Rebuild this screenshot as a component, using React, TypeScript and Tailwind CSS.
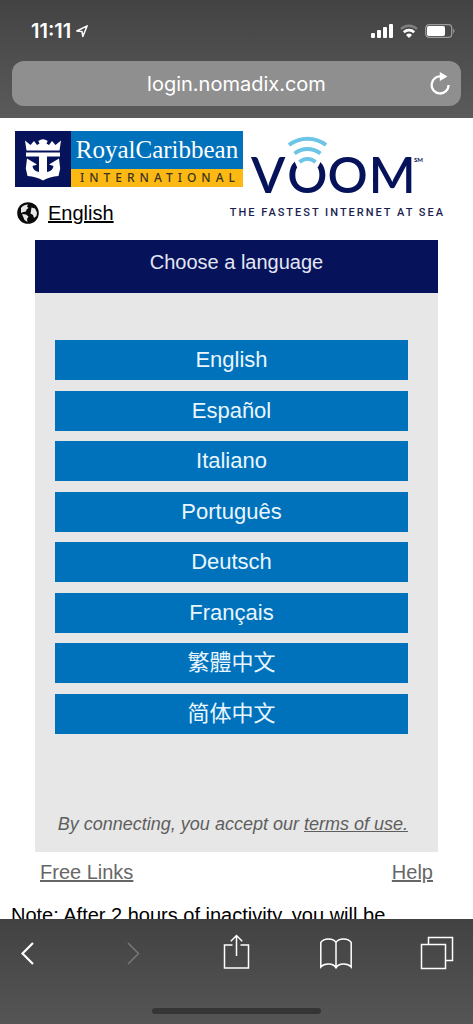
import type { ReactNode } from "react";

const languages = [
  { code: "en", label: "English" },
  { code: "es", label: "Español" },
  { code: "it", label: "Italiano" },
  { code: "pt", label: "Português" },
  { code: "de", label: "Deutsch" },
  { code: "fr", label: "Français" },
  { code: "zh-Hant", label: "繁體中文" },
  { code: "zh-Hans", label: "简体中文" },
];

function StatusIcons() {
  return (
    <div className="flex items-center gap-[7px] text-white">
      <svg width="22" height="14" viewBox="0 0 22 14" fill="currentColor">
        <rect x="0" y="9" width="4" height="5" rx="1" />
        <rect x="6" y="6" width="4" height="8" rx="1" />
        <rect x="12" y="3" width="4" height="11" rx="1" />
        <rect x="18" y="0" width="4" height="14" rx="1" />
      </svg>
      <svg width="18" height="14" viewBox="0 0 18 14" fill="none" stroke="currentColor">
        <path d="M1 5a11.5 11.5 0 0 1 16 0" strokeWidth="2.4" opacity="0.3" />
        <path d="M3.8 8.2a7.6 7.6 0 0 1 10.4 0" strokeWidth="2.6" />
        <path d="M6 11a4.4 4.4 0 0 1 6 0l-3 3z" fill="currentColor" stroke="none" />
      </svg>
      <svg width="30" height="14" viewBox="0 0 30 14">
        <rect x="0.7" y="0.7" width="26" height="12.6" rx="3.4" fill="none" stroke="#fff" strokeOpacity="0.45" strokeWidth="1.3" />
        <rect x="2" y="2" width="18" height="10" rx="1.8" fill="#fff" />
        <path d="M28.2 4.6c1.8.8 1.8 4 0 4.8z" fill="#fff" fillOpacity="0.45" />
      </svg>
    </div>
  );
}

function BrowserHeader() {
  return (
    <header className="shrink-0 bg-linear-to-b from-[#434343] to-[#5b5b5b] px-3 pb-3 font-[Inter,sans-serif]">

      {/* Status bar */}

      <div className="flex h-[61px] items-center justify-between pr-[6px] pl-[19px]">
        <div className="flex items-center gap-1 text-xl font-semibold text-white">
          11:11
          <svg width="14" height="14" viewBox="0 0 14 14" fill="none" stroke="#fff" strokeWidth="1.5" strokeLinejoin="round">
            <path d="M12.200 1.800 1.800 7l5.200.6.8 4.900z" />
          </svg>
        </div>
        <StatusIcons />
      </div>

      {/* Address bar */}

      <div className="flex h-[45px] items-center rounded-xl bg-[#8f8f8f] pr-[6px] pl-9">
        <input
          aria-label="Address"
          defaultValue="login.nomadix.com"
          className="min-w-0 flex-1 bg-transparent text-center text-xl text-white outline-none"
        />
        <button type="button" aria-label="Reload" className="grid size-[30px] place-items-center">
          <svg width="22" height="24" viewBox="0 0 22 24" fill="none" stroke="#fff" strokeWidth="2.300">
            <path d="M12.500 4.600A8.500 8.500 0 1 0 19.600 13" />
            <path d="M10.800 0 18.500 4.600 10.800 9z" fill="#fff" stroke="none" />
          </svg>
        </button>
      </div>
    </header>
  );
}

function RoyalCaribbeanLogo() {
  return (
    <div className="flex h-14 w-[228px] shrink-0">
      <div className="grid w-14 place-items-center bg-[#06135a]">
        <svg width="40" height="44" viewBox="0 0 40 44" fill="#fff">
          <path d="M2 3.500 7.500 8 11 4l3 4 2.500-1.500-1.200-2.500q4.700-3.500 9.400 0l-1.200 2.500L26 8l3-4 3.500 4L38 3.500 36.500 13.500h-33z" />
          <path d="M3 15.500h34v4H24v15.500q6-.8 6.500-6l-4.500-1.500L36 21.500l1.200 10-1.700 7.500q-9 .5-15.500 4.500-6.500-4-15.500-4.500l-1.700-7.500 1.200-10L14 27.500 9.500 29q.5 5.200 6.500 6V19.500H3z" />
        </svg>
      </div>
      <div className="flex min-w-0 flex-1 flex-col text-center">
        <div className="h-[38px] bg-[#0072bc] font-[Liberation_Serif,serif] text-[25px] leading-[38px] whitespace-nowrap text-white">
          RoyalCaribbean
        </div>
        <div className="h-[18px] bg-[#fdb913] pl-[6px] font-[Noto_Sans,sans-serif] text-xs leading-[18px] font-medium tracking-[5px] whitespace-nowrap text-[#3a3322]">
          INTERNATIONAL
        </div>
      </div>
    </div>
  );
}

function VoomLogo() {
  return (
    <svg width="174" height="66" viewBox="0 0 174 66" role="img" aria-label="Voom" className="overflow-visible">
      <g fontFamily="Lato, sans-serif" fill="#06135a">
        <text x="0" y="62" dx="0 3 0 1" fontSize="50" fontWeight="600">VOOM</text>
        <text x="163" y="31" fontSize="6" fontWeight="700">SM</text>
      </g>
      {/* opening at the top of the first O */}
      <path d="M39 20h36l-8 16H46z" fill="#fff" />
      <g fill="none" stroke="#6cc5e6" strokeWidth="4">
        <path d="M38 14c11-8.500 26-8.500 37 0" />
        <path d="M43.500 22.500c8-6 18-6 26 0" />
        <path d="M48.500 31c5-4 11-4 16 0" />
      </g>
    </svg>
  );
}

function Globe() {
  return (
    <svg width="22" height="22" viewBox="0 0 22 22">
      <circle cx="11" cy="11" r="10.800" fill="#0a0a0a" />
      <path d="M4 6C5.500 4 8 2.500 11 2.500l-1 2 1.500 1.500-2 1.500-.5 2-2.500.5L4 11z" fill="#e8e8e8" />
      <path d="M5 12l4 .5 2.500 2-1.500 2.500.5 3-3-2z" fill="#e8e8e8" />
      <path d="M14.500 5.500l3.500 1 2 4-.5 3.500-2.500 2-1-3-2.500-1.500.5-3z" fill="#e8e8e8" />
    </svg>
  );
}

function ToolButton({ label, disabled, children }: { label: string; disabled?: boolean; children: ReactNode }) {
  return (
    <button type="button" aria-label={label} disabled={disabled} className="text-white disabled:text-[#777]">
      <svg width="34" height="36" viewBox="0 0 34 36" fill="none" stroke="currentColor" strokeWidth="1.500">
        {children}
      </svg>
    </button>
  );
}

function Toolbar() {
  return (
    <footer className="flex h-[105px] shrink-0 flex-col items-center justify-between bg-linear-to-b from-[#424242] to-[#555] pt-[15px] pb-[10px]">
      <nav className="flex w-full justify-between pr-[19px] pl-[11px]">
        <ToolButton label="Back">
          <path d="M22 9 11.500 19.500 22 30" strokeWidth="2.200" />
        </ToolButton>
        <ToolButton label="Forward" disabled>
          <path d="M15 9l10.500 10.500L15 30" />
        </ToolButton>
        <ToolButton label="Share">
          <path d="M16.500 11H8.500v23h24V11h-8" />
          <path d="M20.500 22V1.500M14.800 7.200l5.700-5.700 5.700 5.700" />
        </ToolButton>
        <ToolButton label="Bookmarks">
          <path d="M18 8.500C15.500 4 6 3.500 2.800 8.500v24.500c3.500-4 12.500-4 15.200.8 2.700-4.800 11.700-4.800 15.200-.8V8.500C30 3.500 20.500 4 18 8.500zM18 8.500v25" />
        </ToolButton>
        <ToolButton label="Tabs">
          <path d="M1.500 10.500h24v24h-24z" />
          <path d="M8.500 10.500V3.500h24v23h-7" />
        </ToolButton>
      </nav>
      <div className="h-[6px] w-[169px] rounded-full bg-[#353535]" />
    </footer>
  );
}

export default function App() {
  return (
    <div className="flex h-screen flex-col overflow-hidden bg-white font-[Liberation_Sans,Noto_Sans_CJK_SC,sans-serif]">
      <BrowserHeader />

      <main className="min-h-0 flex-1 overflow-hidden pt-[13px]">

        {/* Logos */}

        <div className="flex items-start gap-2 pl-[15px]">
          <RoyalCaribbeanLogo />
          <VoomLogo />
        </div>

        <div className="mt-1 flex items-center justify-between pr-7 pl-[17px]">
          <a href="#language" className="flex items-center gap-[9px] text-xl leading-6 text-black">
            <Globe />
            <span className="underline">English</span>
          </a>
          <p className="font-[Roboto,sans-serif] text-[11px] leading-6 font-medium tracking-[2px] whitespace-nowrap text-[#1b1f4f]">
            THE FASTEST INTERNET AT SEA
          </p>
        </div>

        {/* Language picker */}

        <section id="language" className="mx-[35px] mt-[15px] bg-[#e7e7e7]">
          <h1 className="h-[53px] bg-[#06135a] pt-[10px] text-center text-xl leading-6 text-[#e4e6f5]">
            Choose a language
          </h1>
          <div className="pt-[47px] pr-[30px] pb-4 pl-5">
            <div className="flex h-[394px] flex-col justify-between">
              {languages.map((lang) => (
                <button
                  key={lang.code}
                  type="button"
                  lang={lang.code}
                  className="h-10 w-full bg-[#0072bc] text-[22px] leading-10 text-[#eaf6ff]"
                >
                  {lang.label}
                </button>
              ))}
            </div>
            <p className="mt-[78px] text-right text-lg leading-6 whitespace-nowrap text-[#5e5e5e] italic">
              By connecting, you accept our{" "}
              <a href="#terms" className="underline">terms of use.</a>
            </p>
          </div>
        </section>

        <div className="mx-10 mt-2 flex justify-between text-xl leading-6 text-[#666]">
          <a href="#free" className="underline">Free Links</a>
          <a href="#help" className="underline">Help</a>
        </div>

        <p className="mt-[19px] ml-[11px] text-xl leading-6 whitespace-nowrap text-black">
          Note: After 2 hours of inactivity, you will be
        </p>
      </main>

      <Toolbar />
    </div>
  );
}
